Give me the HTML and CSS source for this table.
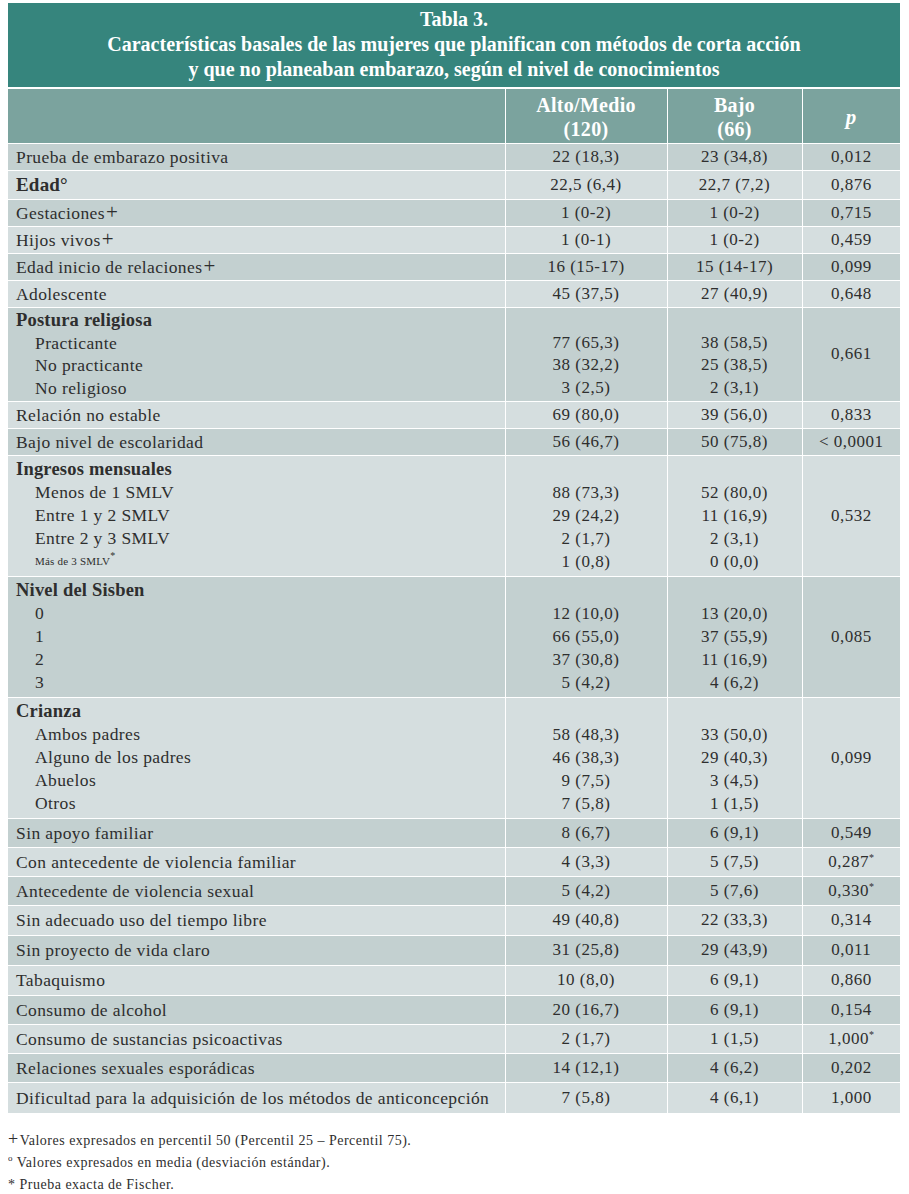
FILE: index.html
```html
<!DOCTYPE html>
<html lang="es">
<head>
<meta charset="utf-8">
<link rel="stylesheet" href="styles.css">
</head>
<body>
<div class="wrap">
  <div class="title">
    <div>Tabla 3.</div>
    <div>Características basales de las mujeres que planifican con métodos de corta acción</div>
    <div>y que no planeaban embarazo, según el nivel de conocimientos</div>
  </div>
  <table class="tbl">
    <colgroup>
      <col class="c1"><col class="c2"><col class="c3"><col class="c4">
    </colgroup>
    <thead>
      <tr class="head">
        <th></th>
        <th>Alto/Medio<br>(120)</th>
        <th>Bajo<br>(66)</th>
        <th><i>p</i></th>
      </tr>
    </thead>
    <tbody>
      <tr class="dk"><td class="lbl">Prueba de embarazo positiva</td><td>22 (18,3)</td><td>23 (34,8)</td><td>0,012</td></tr>
      <tr class="lt tall"><td class="lbl"><b class="big">Edad°</b></td><td>22,5 (6,4)</td><td>22,7 (7,2)</td><td>0,876</td></tr>
      <tr class="dk"><td class="lbl">Gestaciones<span class="plus">+</span></td><td>1 (0-2)</td><td>1 (0-2)</td><td>0,715</td></tr>
      <tr class="lt"><td class="lbl">Hijos vivos<span class="plus">+</span></td><td>1 (0-1)</td><td>1 (0-2)</td><td>0,459</td></tr>
      <tr class="dk"><td class="lbl">Edad inicio de relaciones<span class="plus">+</span></td><td>16 (15-17)</td><td>15 (14-17)</td><td>0,099</td></tr>
      <tr class="lt"><td class="lbl">Adolescente</td><td>45 (37,5)</td><td>27 (40,9)</td><td>0,648</td></tr>
      <tr class="dk grp g4">
        <td class="lbl"><div class="gh">Postura religiosa</div><div class="sub">Practicante</div><div class="sub">No practicante</div><div class="sub">No religioso</div></td>
        <td><div>&nbsp;</div><div>77 (65,3)</div><div>38 (32,2)</div><div>3 (2,5)</div></td>
        <td><div>&nbsp;</div><div>38 (58,5)</div><div>25 (38,5)</div><div>2 (3,1)</div></td>
        <td>0,661</td>
      </tr>
      <tr class="lt"><td class="lbl">Relación no estable</td><td>69 (80,0)</td><td>39 (56,0)</td><td>0,833</td></tr>
      <tr class="dk"><td class="lbl">Bajo nivel de escolaridad</td><td>56 (46,7)</td><td>50 (75,8)</td><td>&lt; 0,0001</td></tr>
      <tr class="lt grp">
        <td class="lbl"><div class="gh">Ingresos mensuales</div><div class="sub">Menos de 1 SMLV</div><div class="sub">Entre 1 y 2 SMLV</div><div class="sub">Entre 2 y 3 SMLV</div><div class="sub small">Más de 3 SMLV<sup>*</sup></div></td>
        <td><div>&nbsp;</div><div>88 (73,3)</div><div>29 (24,2)</div><div>2 (1,7)</div><div>1 (0,8)</div></td>
        <td><div>&nbsp;</div><div>52 (80,0)</div><div>11 (16,9)</div><div>2 (3,1)</div><div>0 (0,0)</div></td>
        <td>0,532</td>
      </tr>
      <tr class="dk grp">
        <td class="lbl"><div class="gh">Nivel del Sisben</div><div class="sub">0</div><div class="sub">1</div><div class="sub">2</div><div class="sub">3</div></td>
        <td><div>&nbsp;</div><div>12 (10,0)</div><div>66 (55,0)</div><div>37 (30,8)</div><div>5 (4,2)</div></td>
        <td><div>&nbsp;</div><div>13 (20,0)</div><div>37 (55,9)</div><div>11 (16,9)</div><div>4 (6,2)</div></td>
        <td>0,085</td>
      </tr>
      <tr class="lt grp">
        <td class="lbl"><div class="gh">Crianza</div><div class="sub">Ambos padres</div><div class="sub">Alguno de los padres</div><div class="sub">Abuelos</div><div class="sub">Otros</div></td>
        <td><div>&nbsp;</div><div>58 (48,3)</div><div>46 (38,3)</div><div>9 (7,5)</div><div>7 (5,8)</div></td>
        <td><div>&nbsp;</div><div>33 (50,0)</div><div>29 (40,3)</div><div>3 (4,5)</div><div>1 (1,5)</div></td>
        <td>0,099</td>
      </tr>
      <tr class="dk lo"><td class="lbl">Sin apoyo familiar</td><td>8 (6,7)</td><td>6 (9,1)</td><td>0,549</td></tr>
      <tr class="lt lo"><td class="lbl">Con antecedente de violencia familiar</td><td>4 (3,3)</td><td>5 (7,5)</td><td>0,287<sup>*</sup></td></tr>
      <tr class="dk lo"><td class="lbl">Antecedente de violencia sexual</td><td>5 (4,2)</td><td>5 (7,6)</td><td>0,330<sup>*</sup></td></tr>
      <tr class="lt xl"><td class="lbl">Sin adecuado uso del tiempo libre</td><td>49 (40,8)</td><td>22 (33,3)</td><td>0,314</td></tr>
      <tr class="dk xl"><td class="lbl">Sin proyecto de vida claro</td><td>31 (25,8)</td><td>29 (43,9)</td><td>0,011</td></tr>
      <tr class="lt xl"><td class="lbl">Tabaquismo</td><td>10 (8,0)</td><td>6 (9,1)</td><td>0,860</td></tr>
      <tr class="dk lo"><td class="lbl">Consumo de alcohol</td><td>20 (16,7)</td><td>6 (9,1)</td><td>0,154</td></tr>
      <tr class="lt lo"><td class="lbl">Consumo de sustancias psicoactivas</td><td>2 (1,7)</td><td>1 (1,5)</td><td>1,000<sup>*</sup></td></tr>
      <tr class="dk lo"><td class="lbl">Relaciones sexuales esporádicas</td><td>14 (12,1)</td><td>4 (6,2)</td><td>0,202</td></tr>
      <tr class="lt xxl"><td class="lbl">Dificultad para la adquisición de los métodos de anticoncepción</td><td>7 (5,8)</td><td>4 (6,1)</td><td>1,000</td></tr>
    </tbody>
  </table>
  <div class="notes">
    <div><span class="plus">+</span>Valores expresados en percentil 50 (Percentil 25 – Percentil 75).</div>
    <div><sup>o</sup> Valores expresados en media (desviación estándar).</div>
    <div>* Prueba exacta de Fischer.</div>
  </div>
</div>
</body>
</html>
```

FILE: styles.css
```css
html, body {
  background: #ffffff;
}
body {
  margin: 3px 9px 0 8px;
  font-family: "Liberation Serif", "Times New Roman", serif;
  color: #2e2e2e;
}
.wrap {
  width: 892px;
}
.title {
  background: #36857d;
  color: #ffffff;
  font-weight: bold;
  font-size: 20px;
  line-height: 25px;
  text-align: center;
  padding: 4px 0 5px;
  border-bottom: 1px solid #ffffff;
}
.tbl {
  width: 892px;
  border-collapse: collapse;
  table-layout: fixed;
}
.c1 { width: 497px; }
.c2 { width: 162px; }
.c3 { width: 135px; }
.c4 { width: 98px; }
.tbl th,
.tbl td {
  border: 1px solid #ffffff;
  padding: 0;
}
.tbl tr > :first-child { border-left: 0; }
.tbl tr > :last-child { border-right: 0; }
.head th {
  background: #7ba39e;
  color: #ffffff;
  font-size: 20px;
  letter-spacing: 0.3px;
  line-height: 24px;
  height: 53px;
  text-align: center;
  vertical-align: middle;
  padding-top: 1px;
}
.head th i {
  font-size: 21px;
}
.tbl td {
  font-size: 17px;
  letter-spacing: 0.5px;
  line-height: 22px;
  padding: 2px 0;
  text-align: center;
  vertical-align: middle;
}
.tbl tr.lo td {
  padding-top: 3px;
  padding-bottom: 3px;
}
.tbl tr.xl td {
  padding-top: 3px;
  padding-bottom: 4px;
}
.tbl tr.xxl td {
  padding-top: 4px;
  padding-bottom: 4px;
}
.tbl tr.tall td {
  padding-top: 3px;
  padding-bottom: 3px;
}
.tbl tr.grp td {
  padding-top: 2px;
  padding-bottom: 3px;
  line-height: 23px;
}
.tbl tr.g4 td {
  padding-top: 1px;
  padding-bottom: 2px;
  line-height: 22.5px;
}
.tbl td.lbl {
  text-align: left;
  padding-left: 8px;
  font-size: 17.5px;
  letter-spacing: 0.4px;
}
.dk td { background: #c3d0d0; }
.lt td { background: #d5dedf; }
.gh {
  font-weight: bold;
  font-size: 18.5px;
  letter-spacing: 0.2px;
}
.big {
  font-size: 19px;
  letter-spacing: 0.2px;
}
.sub {
  padding-left: 19px;
}
.sub.small {
  font-size: 11px;
  letter-spacing: 0.2px;
}
.plus {
  font-size: 21px;
  font-weight: 300;
  line-height: 0;
  padding-left: 1px;
}
sup {
  font-size: 10px;
  line-height: 0;
  vertical-align: 6px;
}
.notes {
  margin-top: 16px;
  font-size: 14px;
  letter-spacing: 0.5px;
  line-height: 22px;
  color: #2e2e2e;
}
.notes .plus {
  font-size: 18px;
  padding: 0 1px 0 0;
}
.notes sup {
  font-size: 9px;
}
```
